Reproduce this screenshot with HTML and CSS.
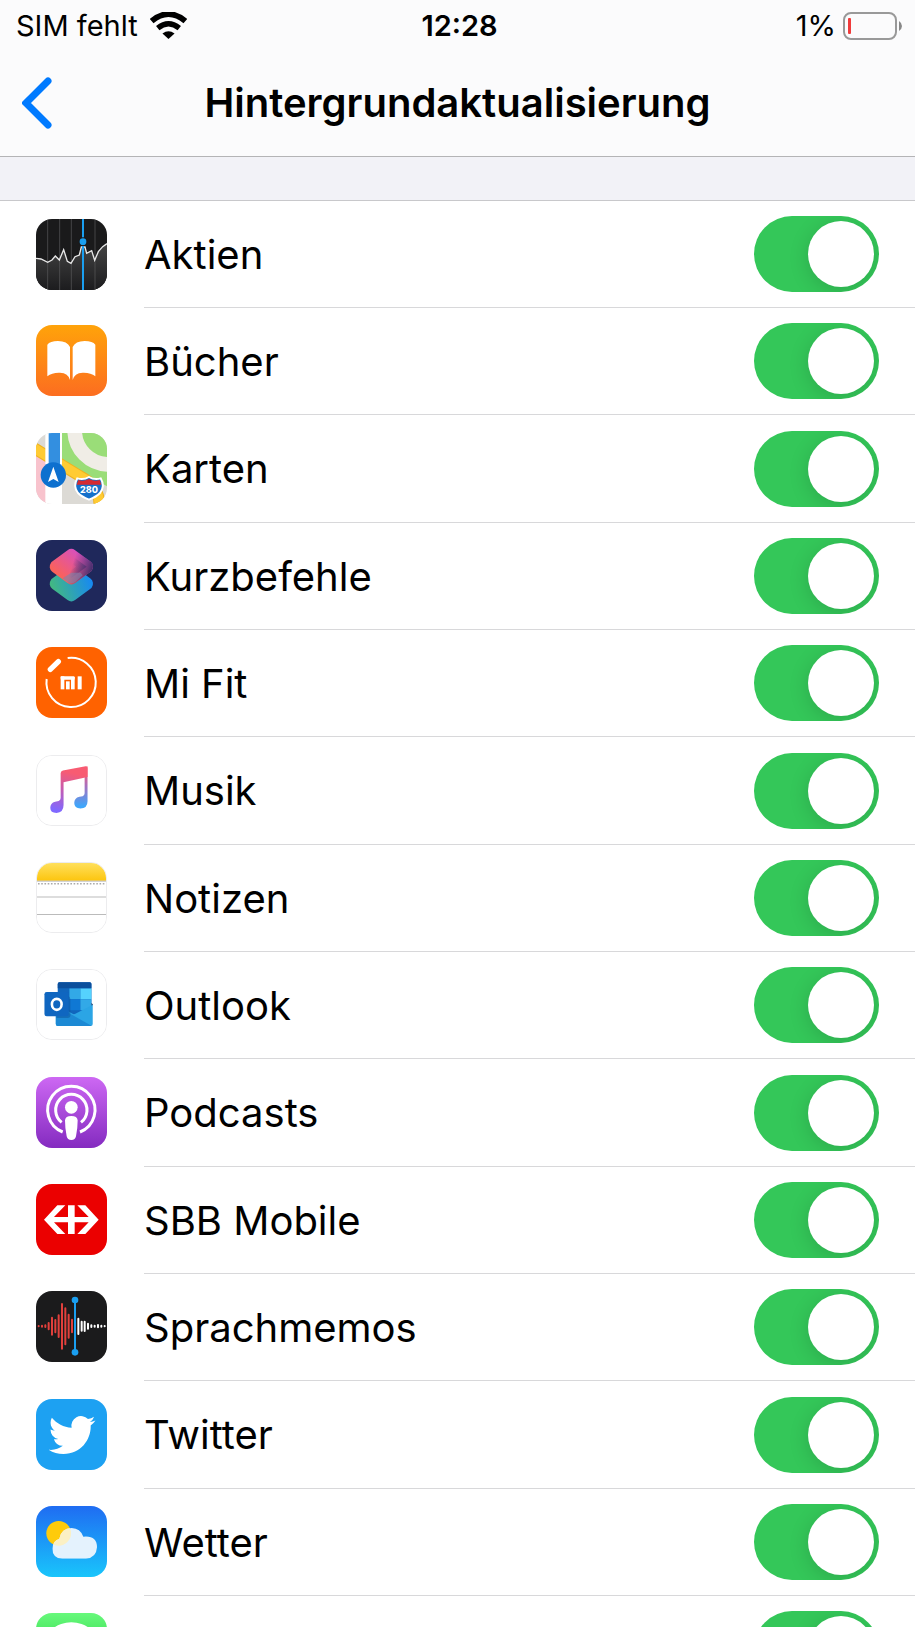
FILE: index.html
```html
<!DOCTYPE html>
<html lang="de">
<head>
  <meta charset="UTF-8" />
  <meta name="viewport" content="width=device-width, initial-scale=1.0" />
  <title>Hintergrundaktualisierung</title>
  <link rel="stylesheet" href="styles.css">
</head>
<body>
  <header class="header">
    <div class="status">
      <div class="status-left">
        <span>SIM fehlt</span>
        <svg class="wifi" viewBox="0 0 110 80" aria-hidden="true">
          <path d="M5 27Q55-15 105 27" fill="none" stroke="#000" stroke-width="17"/>
          <path d="M23 48Q55 22 87 48" fill="none" stroke="#000" stroke-width="16"/>
          <path d="M37 64Q55 50 73 64L55 80Z"/>
        </svg>
      </div>
      <time class="clock">12:28</time>
      <div class="status-right">
        <span>1%</span>
        <svg class="battery" viewBox="0 0 60 28" aria-hidden="true">
          <rect x="1" y="1" width="52" height="26" rx="7" fill="none" stroke="#999" stroke-width="2"/>
          <rect x="5" y="6" width="3" height="16" rx="1" fill="#f03b3b"/>
          <path d="M56 9Q59 11 59 14T56 19Z" fill="#888"/>
        </svg>
      </div>
    </div>
    <nav class="navbar">
      <a class="back" href="#" aria-label="Zurück">
        <svg viewBox="0 0 30 52" aria-hidden="true">
          <path d="M26 4L4 26L26 48" fill="none" stroke="#007aff" stroke-width="7" stroke-linecap="round"/>
        </svg>
      </a>
      <h1>Hintergrundaktualisierung</h1>
    </nav>
  </header>

  <main class="content">
    <ul class="apps">
      <li class="app">
        <svg class="icon" viewBox="0 0 213 213" aria-hidden="true">
          <defs>
            <linearGradient id="stocks" x2="0" y2="1"><stop offset="0" stop-color="#444"/><stop offset="1" stop-color="#1c1c1e"/></linearGradient>
          </defs>
          <rect width="213" height="213" fill="#1a1a1b"/>
          <path d="M0 118L15 120L35 130L48 123L58 111L70 123L83 92L94 127L105 133L117 113L130 108L136 84H147L152 103L167 95L176 124L187 98L200 83L213 74V213H0Z" fill="url(#stocks)"/>
          <path d="M35 0V213M71 0V213M106 0V213M177 0V213" stroke="#5a5a5c" stroke-width="2"/>
          <path d="M0 118L15 120L35 130L48 123L58 111L70 123L83 92L94 127L105 133L117 113L130 108L136 84H147L152 103L167 95L176 124L187 98L200 83L213 74" fill="none" stroke="#e8e8e8" stroke-width="4"/>
          <path d="M141 0V213" stroke="#1a9ff0" stroke-width="6"/>
          <circle cx="141" cy="68" r="13" fill="#1a1a1b"/>
          <circle cx="141" cy="68" r="10" fill="#1a9ff0"/>
        </svg>
        <div class="row">
          <label for="aktien">Aktien</label>
          <input type="checkbox" class="switch" id="aktien" checked>
        </div>
      </li>
      <li class="app">
        <svg class="icon" viewBox="0 0 213 213" aria-hidden="true">
          <defs>
            <linearGradient id="books" x2="0" y2="1"><stop offset="0" stop-color="#ffa30a"/><stop offset="1" stop-color="#fc6d20"/></linearGradient>
          </defs>
          <rect width="213" height="213" fill="url(#books)"/>
          <path d="M34 59Q42 48 66 48Q94 48 102 66V165Q97 144 72 143Q48 142 34 154Z" fill="#fff"/>
          <path d="M178 59Q170 48 146 48Q118 48 110 66V165Q115 144 140 143Q164 142 178 154Z" fill="#fff"/>
        </svg>
        <div class="row">
          <label for="buecher">Bücher</label>
          <input type="checkbox" class="switch" id="buecher" checked>
        </div>
      </li>
      <li class="app">
        <svg class="icon" viewBox="0 0 213 213" aria-hidden="true">
          <rect width="213" height="213" fill="#dcdad5"/>
          <path d="M78 0H213V160L78 84Z" fill="#9add78"/>
          <circle cx="218" cy="-8" r="102" fill="none" stroke="#f0ede6" stroke-width="44"/>
          <path d="M0 60L30 80V213H0Z" fill="#f8c3cd"/>
          <path d="M-5 46L130 128Q190 160 190 213" fill="none" stroke="#eeb320" stroke-width="35"/>
          <path d="M-5 46L130 128Q190 160 190 213" fill="none" stroke="#ffcb33" stroke-width="29"/>
          <path d="M28 0H78V213H28Z" fill="#fff"/>
          <path d="M38 0H72V110H38Z" fill="#338fe0"/>
          <circle cx="52" cy="126" r="38" fill="#0d70cf"/>
          <path d="M52 101L68 147L52 138L36 147Z" fill="#fff"/>
          <path d="M124 136Q142 142 159 132Q176 142 194 136Q208 160 192 180Q182 191 159 200Q136 191 126 180Q110 160 124 136Z" fill="#1570ca" stroke="#fff" stroke-width="6"/>
          <path d="M127 141Q143 147 159 138Q175 147 191 141L196 155H122Z" fill="#d42a32"/>
          <text x="159" y="181" class="shield">280</text>
        </svg>
        <div class="row">
          <label for="karten">Karten</label>
          <input type="checkbox" class="switch" id="karten" checked>
        </div>
      </li>
      <li class="app">
        <svg class="icon" viewBox="0 0 213 213" aria-hidden="true">
          <defs>
            <linearGradient id="cutBottom" gradientUnits="userSpaceOnUse" x1="55" y1="160" x2="170" y2="120"><stop offset="0" stop-color="#42b883"/><stop offset="1" stop-color="#1688f5"/></linearGradient>
            <linearGradient id="cutTop" gradientUnits="userSpaceOnUse" x1="70" y1="110" x2="130" y2="40"><stop offset="0" stop-color="#fb6258"/><stop offset="1" stop-color="#d850bd"/></linearGradient>
            <linearGradient id="cutShade" gradientUnits="userSpaceOnUse" x1="110" y1="70" x2="172" y2="90"><stop offset="0" stop-color="#4a3270" stop-opacity="0"/><stop offset="1" stop-color="#3a2c66"/></linearGradient>
            <clipPath id="cutOverlap"><path d="M106 78Q112 78 120 84L162 116Q172 126 172 131L106 190L40 131Q40 126 50 116L92 84Q100 78 106 78Z"/></clipPath>
          </defs>
          <rect width="213" height="213" fill="#1f285b"/>
          <path d="M60 131L106 97L152 131L106 165Z" fill="url(#cutBottom)" stroke="url(#cutBottom)" stroke-width="38" stroke-linejoin="round"/>
          <path d="M60 80L106 46L152 80L106 114Z" fill="url(#cutTop)" stroke="url(#cutTop)" stroke-width="38" stroke-linejoin="round"/>
          <path d="M60 80L106 46L152 80L106 114Z" fill="url(#cutShade)" stroke="url(#cutShade)" stroke-width="38" stroke-linejoin="round"/>
          <path d="M106 98L134 98L140 106L119 125Q106 135 93 125L80 115Z" fill="#7c83ad" opacity=".6" clip-path="url(#cutOverlap)"/>
        </svg>
        <div class="row">
          <label for="kurzbefehle">Kurzbefehle</label>
          <input type="checkbox" class="switch" id="kurzbefehle" checked>
        </div>
      </li>
      <li class="app">
        <svg class="icon" viewBox="0 0 213 213" aria-hidden="true">
          <rect width="213" height="213" fill="#ff6200"/>
          <path d="M95 33A74 74 0 1 1 32 96" fill="none" stroke="#fff" stroke-width="6"/>
          <path d="M43 67L67 44" stroke="#fff" stroke-width="16" stroke-linecap="round"/>
          <g fill="#fff">
            <rect x="74" y="88" width="11" height="39"/>
            <rect x="74" y="88" width="42" height="10" rx="3"/>
            <rect x="105" y="90" width="11" height="37"/>
            <rect x="90" y="103" width="11" height="24"/>
            <rect x="125" y="88" width="12" height="39"/>
          </g>
        </svg>
        <div class="row">
          <label for="mifit">Mi Fit</label>
          <input type="checkbox" class="switch" id="mifit" checked>
        </div>
      </li>
      <li class="app">
        <svg class="icon framed" viewBox="0 0 213 213" aria-hidden="true">
          <defs>
            <linearGradient id="noteLeft" gradientUnits="userSpaceOnUse" x1="100" y1="50" x2="70" y2="170"><stop offset="0" stop-color="#f85b72"/><stop offset=".45" stop-color="#c65bb0"/><stop offset="1" stop-color="#8068ff"/></linearGradient>
            <linearGradient id="noteRight" gradientUnits="userSpaceOnUse" x1="140" y1="40" x2="140" y2="155"><stop offset="0" stop-color="#f85b72"/><stop offset=".45" stop-color="#a96fbd"/><stop offset="1" stop-color="#3ea6fb"/></linearGradient>
          </defs>
          <rect width="213" height="213" fill="#fff"/>
          <path d="M147 36L156 32V140Q156 162 134 162Q115 161 115 145Q115 130 131 126L141 124Q147 122 147 115Z" fill="url(#noteRight)"/>
          <path d="M73 53Q73 47 80 45L150 32Q156 31 156 38V65L82 81V151Q82 174 60 176Q41 176 41 160Q41 145 56 141L67 139Q73 137 73 130Z" fill="url(#noteLeft)"/>
        </svg>
        <div class="row">
          <label for="musik">Musik</label>
          <input type="checkbox" class="switch" id="musik" checked>
        </div>
      </li>
      <li class="app">
        <svg class="icon framed" viewBox="0 0 213 213" aria-hidden="true">
          <defs>
            <linearGradient id="notes" x2="0" y2="1"><stop offset="0" stop-color="#ffe05c"/><stop offset="1" stop-color="#fcc50e"/></linearGradient>
          </defs>
          <rect width="213" height="213" fill="#fff"/>
          <rect width="213" height="55" fill="url(#notes)"/>
          <path d="M0 56H213M0 105H213M0 159H213" stroke="#b9b9b9" stroke-width="3"/>
          <path d="M3 64H213" stroke="#aaa" stroke-width="5" stroke-dasharray="5 5"/>
        </svg>
        <div class="row">
          <label for="notizen">Notizen</label>
          <input type="checkbox" class="switch" id="notizen" checked>
        </div>
      </li>
      <li class="app">
        <svg class="icon framed" viewBox="0 0 213 213" aria-hidden="true">
          <rect width="213" height="213" fill="#fff"/>
          <rect x="64" y="38" width="104" height="100" rx="5" fill="#1066bd"/>
          <path d="M64 56V43Q64 38 69 38H163Q168 38 168 43V56Z" fill="#0b4f9c"/>
          <path d="M100 57H134V90H100Z" fill="#32a9e7"/>
          <path d="M134 57H168V90H134Z" fill="#55d2fd"/>
          <path d="M100 90H134V124H100Z" fill="#0f78d4"/>
          <path d="M134 90H168V124H134Z" fill="#32a9e7"/>
          <path d="M168 101L173 107L168 112Z" fill="#123b6d"/>
          <path d="M58 106L114 137L172 107V167Q172 173 166 173H64Q58 173 58 167Z" fill="#2ba5e5"/>
          <path d="M58 110L168 172Q167 173 164 173H64Q58 173 58 167Z" fill="#1c89d4"/>
          <path d="M97 80Q103 84 103 90V140Q103 148 95 148H60V142Z" fill="#0b549c" opacity=".5"/>
          <rect x="23" y="68" width="75" height="75" rx="7" fill="#0f66c0"/>
          <ellipse cx="61" cy="106" rx="15" ry="17" fill="none" stroke="#fff" stroke-width="8"/>
        </svg>
        <div class="row">
          <label for="outlook">Outlook</label>
          <input type="checkbox" class="switch" id="outlook" checked>
        </div>
      </li>
      <li class="app">
        <svg class="icon" viewBox="0 0 213 213" aria-hidden="true">
          <defs>
            <linearGradient id="podcasts" x2="0" y2="1"><stop offset="0" stop-color="#cd68f3"/><stop offset="1" stop-color="#842bc0"/></linearGradient>
          </defs>
          <rect width="213" height="213" fill="url(#podcasts)"/>
          <path d="M80 165A71 71 0 1 1 132 165" fill="none" stroke="#fff" stroke-width="9"/>
          <path d="M77 136A47 47 0 1 1 135 136" fill="none" stroke="#fff" stroke-width="9"/>
          <circle cx="106" cy="91" r="19" fill="#fff"/>
          <path d="M87 130Q88 117 106 117Q124 117 125 130Q125 155 120 178Q118 189 106 189Q94 189 92 178Q87 155 87 130Z" fill="#fff"/>
        </svg>
        <div class="row">
          <label for="podcasts-an">Podcasts</label>
          <input type="checkbox" class="switch" id="podcasts-an" checked>
        </div>
      </li>
      <li class="app">
        <svg class="icon" viewBox="0 0 213 213" aria-hidden="true">
          <rect width="213" height="213" fill="#eb0000"/>
          <path d="M24 107L64 64H88L54 99H96V64H116V99H158L124 64H148L188 107L148 150H124L158 115H116V150H96V115H54L88 150H64Z" fill="#fff"/>
        </svg>
        <div class="row">
          <label for="sbb">SBB Mobile</label>
          <input type="checkbox" class="switch" id="sbb" checked>
        </div>
      </li>
      <li class="app">
        <svg class="icon" viewBox="0 0 213 213" aria-hidden="true">
          <rect width="213" height="213" fill="#1b1b1c"/>
          <g fill="none" stroke-width="6" stroke-linecap="round">
            <path d="M8 105V106M18 104V107M28 103V108M38 96V115M48 80V131M58 87V124M68 73V138M78 39V173M88 52V160M98 71V140M108 86V124" stroke="#e2403c"/>
            <path d="M127 83V129M137 92V119M146 92V120M156 98V113M166 103V108M176 104V107M186 102V109M196 104V107M206 105V106" stroke="#fff"/>
          </g>
          <path d="M117 26V184" stroke="#1a9ff0" stroke-width="6"/>
          <circle cx="117" cy="27" r="10" fill="#1a9ff0"/>
          <circle cx="117" cy="184" r="10" fill="#1a9ff0"/>
        </svg>
        <div class="row">
          <label for="sprachmemos">Sprachmemos</label>
          <input type="checkbox" class="switch" id="sprachmemos" checked>
        </div>
      </li>
      <li class="app">
        <svg class="icon" viewBox="0 0 213 213" aria-hidden="true">
          <rect width="213" height="213" fill="#1da1f2"/>
          <path transform="translate(38 38) scale(5.85)" fill="#fff" d="M23.953 4.57a10 10 0 01-2.825.775 4.958 4.958 0 002.163-2.723c-.951.555-2.005.959-3.127 1.184a4.92 4.92 0 00-8.384 4.482C7.69 8.095 4.067 6.13 1.64 3.162a4.822 4.822 0 00-.666 2.475c0 1.71.87 3.213 2.188 4.096a4.904 4.904 0 01-2.228-.616v.06a4.923 4.923 0 003.946 4.827 4.996 4.996 0 01-2.212.085 4.936 4.936 0 004.604 3.417 9.867 9.867 0 01-6.102 2.105c-.39 0-.779-.023-1.17-.067a13.995 13.995 0 007.557 2.209c9.053 0 13.998-7.496 13.998-13.985 0-.21 0-.42-.015-.63A9.935 9.935 0 0024 4.59z"/>
        </svg>
        <div class="row">
          <label for="twitter">Twitter</label>
          <input type="checkbox" class="switch" id="twitter" checked>
        </div>
      </li>
      <li class="app">
        <svg class="icon" viewBox="0 0 213 213" aria-hidden="true">
          <defs>
            <linearGradient id="sky" x2="0" y2="1"><stop offset="0" stop-color="#1f6cf2"/><stop offset="1" stop-color="#19c5fb"/></linearGradient>
            <clipPath id="cloud"><path d="M79 158Q49 156 49 128Q50 104 70 98Q76 66 107 66Q133 67 142 92Q183 88 183 124Q181 156 150 158Z"/></clipPath>
          </defs>
          <rect width="213" height="213" fill="url(#sky)"/>
          <circle cx="68" cy="82" r="37" fill="#fecb0b"/>
          <g clip-path="url(#cloud)">
            <rect x="40" y="60" width="150" height="100" fill="#e4f2fd"/>
            <circle cx="68" cy="82" r="37" fill="#fbf0c4"/>
          </g>
        </svg>
        <div class="row">
          <label for="wetter">Wetter</label>
          <input type="checkbox" class="switch" id="wetter" checked>
        </div>
      </li>
      <li class="app">
        <svg class="icon" viewBox="0 0 213 213" aria-hidden="true">
          <defs>
            <linearGradient id="chat" x2="0" y2="1"><stop offset="0" stop-color="#67f97b"/><stop offset="1" stop-color="#0cbc29"/></linearGradient>
          </defs>
          <rect width="213" height="213" fill="url(#chat)"/>
          <ellipse cx="106" cy="95" rx="80" ry="67" fill="#fff"/>
        </svg>
        <div class="row">
          <label for="chat-an"></label>
          <input type="checkbox" class="switch" id="chat-an" checked>
        </div>
      </li>
    </ul>
  </main>
</body>
</html>
```
FILE: styles.css
```css
* {
  box-sizing: border-box;
}
body {
  margin: 0;
  height: 100vh;
  display: flex;
  flex-direction: column;
  overflow: hidden;
  font-family: Inter, "Liberation Sans", sans-serif;
  background: #f2f2f7;
  color: #000;
}

/* Kopfbereich */
.header {
  flex: none;
  background: #fbfbfc;
  border-bottom: 1px solid #b4b4b6;
}
.status {
  display: grid;
  grid-template-columns: 1fr auto 1fr;
  align-items: center;
  height: 49px;
  padding: 2px 12px 0 16px;
  font-size: 29px;
}
.status-left,
.status-right {
  display: flex;
  align-items: center;
}
.status-left {
  gap: 12px;
}
.status-right {
  justify-content: flex-end;
  gap: 7px;
}
.wifi {
  width: 37px;
  height: 27px;
}
.battery {
  width: 60px;
  height: 28px;
}
.clock {
  font-weight: 600;
}
.navbar {
  display: grid;
  grid-template-columns: 1fr auto 1fr;
  align-items: center;
  height: 107px;
  padding: 0 22px;
}
.back svg {
  display: block;
  width: 30px;
  height: 52px;
}
h1 {
  margin: 0;
  font-size: 40px;
  font-weight: 600;
}

/* App-Liste */
.content {
  flex: 1;
  min-height: 0;
  padding-top: 43px;
  overflow-y: auto;
  scrollbar-width: none;
}
.apps {
  margin: 0;
  padding: 0;
  list-style: none;
  background: #fff;
}
.app {
  display: flex;
  align-items: center;
  gap: 37px;
  height: 107px;
  padding-left: 36px;
}
.app:nth-child(3n) {
  height: 108px;
}
.app:first-child {
  border-top: 1px solid #c8c8cb;
}
.icon {
  flex: none;
  width: 71px;
  height: 71px;
  border-radius: 16px;
}
.framed {
  border: 1px solid #ececee;
}
.shield {
  font-family: Inter, sans-serif;
  font-size: 27px;
  font-weight: 800;
  text-anchor: middle;
  fill: #fff;
}
.row {
  flex: 1;
  align-self: stretch;
  display: flex;
  align-items: center;
  justify-content: space-between;
  padding-right: 36px;
  border-top: 1px solid #d8d8da;
}
.app:first-child .row {
  border-top: 0;
}
.row label {
  font-size: 40px;
}

/* Schalter */
.switch {
  appearance: none;
  flex: none;
  width: 125px;
  height: 76px;
  margin: 0;
  padding: 5px;
  border-radius: 38px;
  background: #e9e9ea;
  overflow: hidden;
  cursor: pointer;
}
.switch::before {
  content: "";
  display: block;
  width: 66px;
  height: 66px;
  border-radius: 50%;
  background: #fff;
  box-shadow: 0 4px 20px rgba(0, 0, 0, 0.15);
}
.switch:checked {
  background: #34c759;
}
.switch:checked::before {
  margin-left: auto;
}
```
